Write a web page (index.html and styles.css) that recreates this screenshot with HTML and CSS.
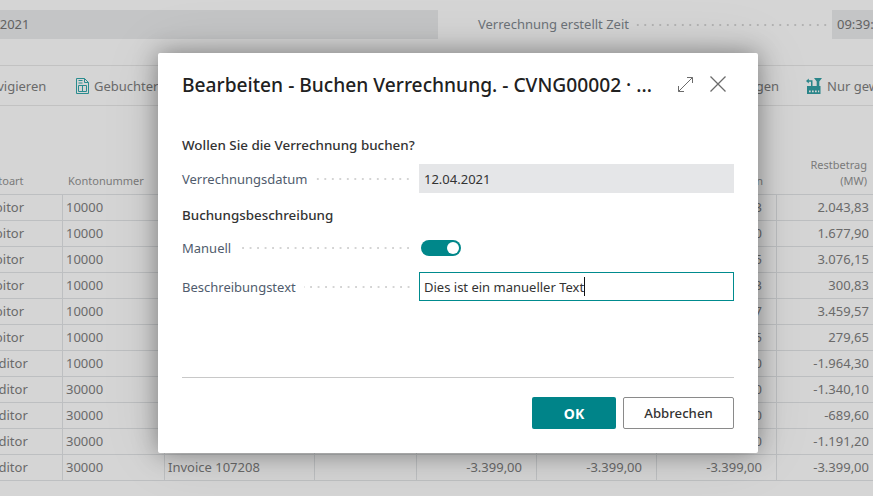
FILE: index.html
```html
<!DOCTYPE html>
<html lang="de">
<head>
<meta charset="utf-8">
<title>Buchen Verrechnung</title>
<link rel="stylesheet" href="styles.css">
</head>
<body>
<div class="page">
  <div class="fields">
    <div class="value value-date">12.04.2021</div>
    <div class="time-field">
      <span class="bg-label">Verrechnung erstellt Zeit</span>
      <span class="dots"></span>
      <div class="value value-time">09:39:12</div>
    </div>
  </div>
  <div class="toolbar">
    <span class="tool tool-nav">Navigieren</span>
    <span class="tool tool-posted">
      <svg class="tool-icon" width="13" height="16" viewBox="0 0 13 16" fill="none" stroke="#2a8c8f"><path d="M.5.5h8l4 4v11H.5zM8.500.5v4h4M2.500 2.500h4M2.500 5h4M2.500 7.500h8v6h-8zM6.500 7.500v6"/></svg>
      Gebuchter Beleg
    </span>
    <span class="tool tool-gen">Erzeugen</span>
    <span class="tool tool-only">
      <svg class="tool-icon" width="16" height="16" viewBox="0 0 16 16"><path d="M1 8h13.500v8H1z" fill="#2a8589"/><path d="M3 12.500h1.700v1.700H3zM6 12.500h1.700v1.700H6zM9 12.500h1.700v1.700H9zM12 12.500h1.200v1.700H12z" fill="#d5d5d5"/><path d="M8 0h8l-2.700 3.500V8h-2.600V3.500z" fill="#2a8589"/><path d="M0 3l2.800-2.500v1.700h3.700V8H5V3.800H2.800v1.700z" fill="#2a8589"/></svg>
      Nur gewählte
    </span>
  </div>
  <div class="table">
    <div class="row head">
      <div class="cell c1">Kontoart</div><div class="cell c2">Kontonummer</div><div class="cell c3"></div><div class="cell c4"></div><div class="cell c5"></div><div class="cell c6"></div><div class="cell c7 num">Offen</div><div class="cell c8 num">Restbetrag<br>(MW)</div>
    </div>
    <div class="row"><div class="cell c1">Debitor</div><div class="cell c2">10000</div><div class="cell c3"></div><div class="cell c4"></div><div class="cell c5"></div><div class="cell c6"></div><div class="cell c7 num">2.043,83</div><div class="cell c8 num">2.043,83</div></div>
    <div class="row"><div class="cell c1">Debitor</div><div class="cell c2">10000</div><div class="cell c3"></div><div class="cell c4"></div><div class="cell c5"></div><div class="cell c6"></div><div class="cell c7 num">1.677,90</div><div class="cell c8 num">1.677,90</div></div>
    <div class="row"><div class="cell c1">Debitor</div><div class="cell c2">10000</div><div class="cell c3"></div><div class="cell c4"></div><div class="cell c5"></div><div class="cell c6"></div><div class="cell c7 num">3.076,15</div><div class="cell c8 num">3.076,15</div></div>
    <div class="row"><div class="cell c1">Debitor</div><div class="cell c2">10000</div><div class="cell c3"></div><div class="cell c4"></div><div class="cell c5"></div><div class="cell c6"></div><div class="cell c7 num">300,83</div><div class="cell c8 num">300,83</div></div>
    <div class="row"><div class="cell c1">Debitor</div><div class="cell c2">10000</div><div class="cell c3"></div><div class="cell c4"></div><div class="cell c5"></div><div class="cell c6"></div><div class="cell c7 num">3.459,57</div><div class="cell c8 num">3.459,57</div></div>
    <div class="row"><div class="cell c1">Debitor</div><div class="cell c2">10000</div><div class="cell c3"></div><div class="cell c4"></div><div class="cell c5"></div><div class="cell c6"></div><div class="cell c7 num">279,65</div><div class="cell c8 num">279,65</div></div>
    <div class="row"><div class="cell c1">Kreditor</div><div class="cell c2">10000</div><div class="cell c3"></div><div class="cell c4"></div><div class="cell c5"></div><div class="cell c6"></div><div class="cell c7 num">-1.964,30</div><div class="cell c8 num">-1.964,30</div></div>
    <div class="row"><div class="cell c1">Kreditor</div><div class="cell c2">30000</div><div class="cell c3"></div><div class="cell c4"></div><div class="cell c5"></div><div class="cell c6"></div><div class="cell c7 num">-1.340,10</div><div class="cell c8 num">-1.340,10</div></div>
    <div class="row"><div class="cell c1">Kreditor</div><div class="cell c2">30000</div><div class="cell c3"></div><div class="cell c4"></div><div class="cell c5"></div><div class="cell c6"></div><div class="cell c7 num">-689,60</div><div class="cell c8 num">-689,60</div></div>
    <div class="row"><div class="cell c1">Kreditor</div><div class="cell c2">30000</div><div class="cell c3"></div><div class="cell c4"></div><div class="cell c5"></div><div class="cell c6"></div><div class="cell c7 num">-1.191,20</div><div class="cell c8 num">-1.191,20</div></div>
    <div class="row"><div class="cell c1">Kreditor</div><div class="cell c2">30000</div><div class="cell c3">Invoice 107208</div><div class="cell c4"></div><div class="cell c5 num">-3.399,00</div><div class="cell c6 num">-3.399,00</div><div class="cell c7 num">-3.399,00</div><div class="cell c8 num">-3.399,00</div></div>
  </div>
</div>

<div class="dialog" role="dialog">
  <div class="dialog-head">
    <h1 class="dialog-title">Bearbeiten - Buchen Verrechnung. - CVNG00002 · ...</h1>
    <svg class="head-icon expand" width="15" height="15" viewBox="0 0 15 15" fill="none" stroke="#6b6b6b"><path d="M.5 14.500l14-14M9 .5h5.500V6M.5 9v5.500H6"/></svg>
    <svg class="head-icon close" width="16" height="16" viewBox="0 0 16 16" fill="none" stroke="#6b6b6b" stroke-width="1.300"><path d="M.5.5l15 15M15.500.5l-15 15"/></svg>
  </div>
  <div class="dialog-body">
    <h2 class="section first">Wollen Sie die Verrechnung buchen?</h2>
    <div class="field">
      <span class="label">Verrechnungsdatum</span><span class="dots"></span>
      <div class="input readonly">12.04.2021</div>
    </div>
    <h2 class="section">Buchungsbeschreibung</h2>
    <div class="field field-toggle">
      <span class="label">Manuell</span><span class="dots"></span>
      <div class="control"><span class="toggle"><span class="knob"></span></span></div>
    </div>
    <div class="field">
      <span class="label">Beschreibungstext</span><span class="dots"></span>
      <div class="input focused"><span>Dies ist ein manueller Text</span><span class="caret"></span></div>
    </div>
  </div>
  <div class="dialog-foot">
    <button class="btn primary">OK</button>
    <button class="btn secondary">Abbrechen</button>
  </div>
</div>
</body>
</html>
```
FILE: styles.css
```css
* { box-sizing: border-box; }
html, body { margin: 0; height: 100%; }
body {
  width: 873px;
  height: 496px;
  overflow: hidden;
  position: relative;
  background: #d5d5d5;
  font-family: "Noto Sans", "Open Sans", sans-serif;
  font-size: 13px;
  color: #333;
}
.page { width: 873px; height: 496px; overflow: hidden; color: #6a6a6a; }

.fields { display: flex; padding-top: 10px; height: 65px; }
.value { height: 29px; line-height: 29px; background: #c4c5c6; color: #626262; font-size: 13px; overflow: hidden; white-space: nowrap; }
.value-date { width: 438px; padding-left: 0; text-indent: -37px; }
.time-field { display: flex; align-items: flex-start; margin-left: 40px; flex: 1; min-width: 0; }
.bg-label { line-height: 29px; color: #6c7278; white-space: nowrap; }
.value-time { width: 41px; flex: none; padding-left: 5px; }

.dots {
  background-image: radial-gradient(circle, #d4d4d4 0.75px, transparent 1px);
  background-size: 7.500px 4px;
  background-repeat: repeat-x;
  background-position: right center;
}
.time-field .dots {
  flex: 1;
  height: 29px;
  margin: 0 3px 0 6px;
  background-image: radial-gradient(circle, #b2b2b2 0.75px, transparent 1px);
}

.toolbar {
  height: 41px;
  border-top: 1px solid #c2c2c2;
  border-bottom: 1px solid #c2c2c2;
  display: flex;
  align-items: center;
  white-space: nowrap;
  color: #6a6a6a;
}
.tool { display: inline-flex; align-items: center; gap: 5px; flex: none; }
.tool-icon { flex: none; }
.tool-nav { margin-left: -20px; width: 96px; }
.tool-posted { width: 140px; }
.tool-gen { margin-left: 500px; width: 63px; justify-content: flex-end; }
.tool-only { margin-left: 27px; }

.table { margin-left: -30px; width: 911px; }
.row { display: flex; height: 26px; border-bottom: 1px solid #bdbfc1; }
.row.head { height: 89px; font-size: 11px; color: #7a7a7a; align-items: flex-end; }
.cell { height: 100%; padding: 0 4px 0 3px; line-height: 25px; white-space: nowrap; border-right: 1px solid #bdbfc1; overflow: hidden; flex: none; }
.head .cell { border-right: 0; line-height: 16px; padding-bottom: 5px; height: auto; }
.c1 { width: 93px; padding-left: 8px; }
.c2 { width: 102px; }
.c3 { width: 150px; }
.c4 { width: 102px; }
.c5 { width: 120px; }
.c6 { width: 120px; }
.c7 { width: 120px; }
.c8 { width: 104px; border-right: 0; }
.num { text-align: right; padding-right: 14px; }
.c8.num { padding-right: 12px; }
.head .c2 { padding-left: 5px; }
.head .c8.num { padding-right: 14px; }

.dialog {
  position: absolute;
  left: 158px;
  top: 53px;
  width: 600px;
  height: 400px;
  background: #fff;
  border-radius: 2px;
  box-shadow: 0 0 24px rgba(0, 0, 0, .38), 0 0 60px rgba(0, 0, 0, .1);
  padding: 0 24px;
  display: flex;
  flex-direction: column;
  color: #333;
}
.dialog-head { display: flex; align-items: center; height: 62px; }
.dialog-title { margin: 0; flex: 1; font-size: 19.200px; font-weight: 500; color: #212121; white-space: nowrap; }
.expand { margin-right: 17px; }
.close { margin-right: 8px; }
.dialog-body { flex: 1; }
.section { margin: 0; font-size: 13.400px; font-weight: 500; color: #333; line-height: 20px; }
.section.first { margin-top: 20px; margin-bottom: 9px; }
.section:not(.first) { margin-top: 12px; margin-bottom: 8px; }
.field { display: flex; align-items: center; height: 29px; margin-bottom: 9px; }
.field-toggle { margin-bottom: 10px; }
.field .label { color: #505c6d; white-space: nowrap; }
.field .dots { flex: 1; height: 20px; margin: 0 7px 0 8px; }
.input { width: 315px; height: 29px; padding: 0 5px; color: #333; flex: none; white-space: nowrap; }
.readonly { background: #e5e6e8; padding-top: 1px; line-height: 28px; }
.focused { border: 1px solid #008b8e; padding: 0 4px; display: flex; align-items: center; }
.caret { width: 1px; height: 19px; background: #111; }
.control { width: 315px; flex: none; display: flex; align-items: center; }
.toggle { width: 40px; height: 16px; border-radius: 8px; background: #00878a; padding: 2px 2px 2px 26px; display: block; margin-left: 2px; }
.knob { display: block; width: 12px; height: 12px; border-radius: 50%; background: #fff; }

.dialog-foot {
  border-top: 1px solid #c8c8c8;
  height: 76px;
  display: flex;
  justify-content: flex-end;
  align-items: flex-start;
  gap: 7px;
  padding-top: 19px;
}
.btn { height: 32px; font-family: inherit; font-size: 13.200px; border-radius: 2px; padding: 0; }
.primary { width: 84px; background: #008489; color: #fff; border: 0; font-weight: 700; font-size: 14px; }
.secondary { width: 111px; background: #fff; color: #333; border: 1px solid #8a8a8a; font-weight: 500; }
```
